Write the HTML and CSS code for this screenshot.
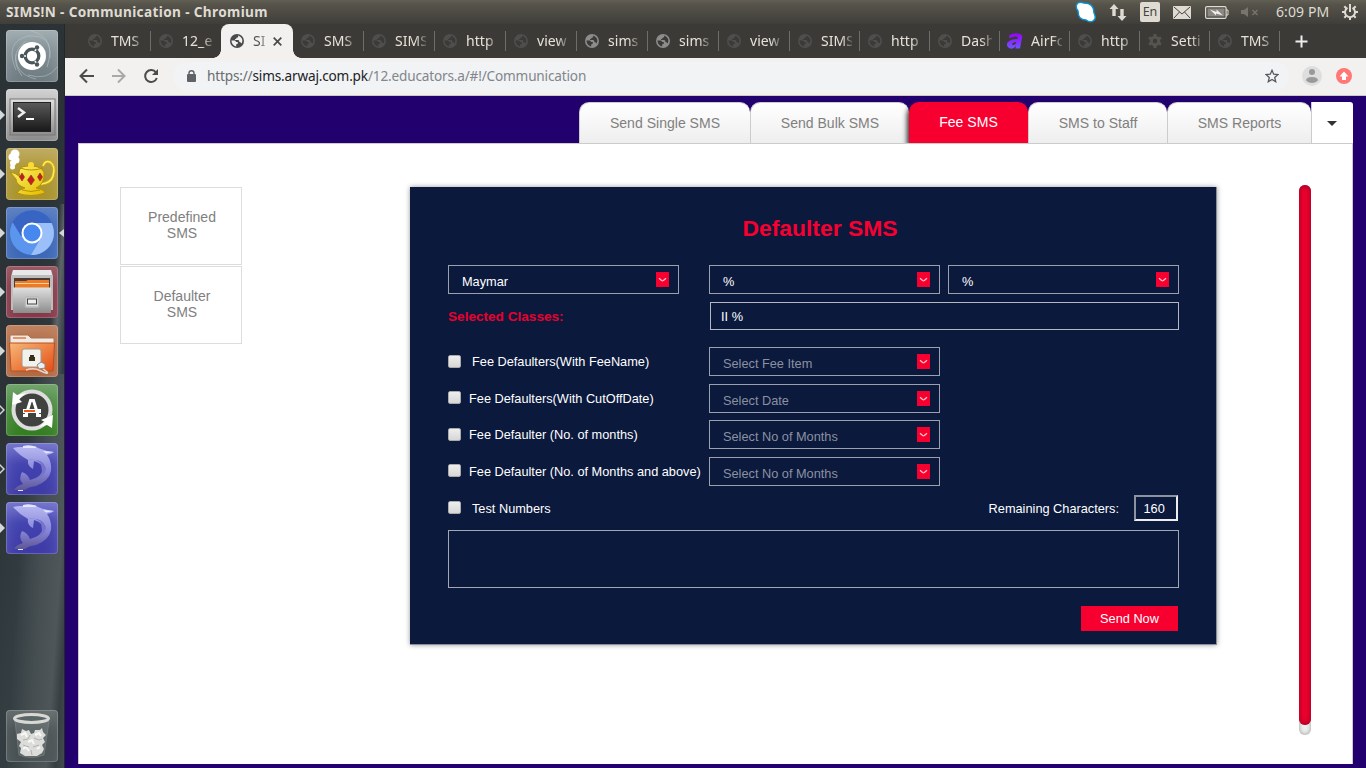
FILE: index.html
```html
<!DOCTYPE html>
<html lang="en">
<head>
<meta charset="utf-8">
<title>SIMS!N - Communication</title>
<link rel="stylesheet" href="styles.css">
</head>
<body>
<svg class="defs" width="0" height="0">
  <defs>
    <symbol id="globe" viewBox="0 0 14 14">
      <circle cx="7" cy="7" r="7" fill="currentColor"/>
      <path d="M1.400 6.500H4.600Q6 6.500 6 8H7.800V9.600Q7.500 10.300 6.200 10.300V12.400Q2 11.700 1.400 6.500Z" fill="var(--land)"/>
      <path d="M8.200 1.600V2.800Q8 3.800 6.600 3.800Q6.600 5 5 5.200V6H8.400Q9.400 6.400 9.400 7.900Q11 7.800 11.500 9.600Q14.200 4.500 8.200 1.600Z" fill="var(--land)"/>
    </symbol>
    <symbol id="dolphin" viewBox="0 0 52 52">
      <path d="M7 5Q12 3.500 17 4L18 3H29L32 5Q39 8 48 9Q46 11 41 12Q46 19 45 28Q43 38 30 43Q22 44 19 47L8 47Q10 43 17 41Q12 36 16 29Q22 31 24 37Q36 34 37 26Q36 20 28 18L27 26Q21 23 22 17Q13 12 7 5Z" fill="url(#fin)"/>
      <path d="M22 17Q30 15 35 21L36 28Q36 34 25 38Q40 34 40 25Q37 15 22 17Z" fill="#7573cc"/>
      <path d="M17 3Q24 1 30 4V5H17ZM37 8Q43 8.500 48 9L40 10.500ZM12 47H17V48H12Z" fill="#e4e6ff"/>
    </symbol>
    <linearGradient id="fin" x2="0" y2="1"><stop stop-color="#b8b9f3"/><stop offset=".6" stop-color="#8584d6"/><stop offset="1" stop-color="#5e5796"/></linearGradient>
    <linearGradient id="silver" x2="0" y2="1"><stop stop-color="#e0e0e0"/><stop offset="1" stop-color="#8c8c8c"/></linearGradient>
    <linearGradient id="screen" x2="0" y2="1"><stop stop-color="#5a5a5a"/><stop offset="1" stop-color="#181818"/></linearGradient>
    <linearGradient id="folder" x2="1" y2="1"><stop stop-color="#f7b878"/><stop offset="1" stop-color="#e44d14"/></linearGradient>
    <linearGradient id="gold" x2="1" y2="1"><stop stop-color="#fff36b"/><stop offset="1" stop-color="#e2bb00"/></linearGradient>
    <linearGradient id="violet" x2="0" y2="1"><stop stop-color="#9b00ff"/><stop offset="1" stop-color="#6f55ff"/></linearGradient>
    <symbol id="chevron" viewBox="0 0 13 15"><path d="M3 6.300L5.600 8.500Q6.500 9.100 7.400 8.500L10 6.300" fill="none" stroke="#ffc4cc" stroke-width="1.300"/></symbol>
  </defs>
</svg>

<header class="menubar">
  <span class="window-title">SIMS!N - Communication - Chromium</span>
  <div class="indicators">
    <svg class="skype" width="22" height="22" viewBox="0 0 22 22"><path d="M2 3Q4 0 9 2Q19 2 19 12Q22 18 18 20Q15 22 11 19Q3 19 3 10Q0 6 2 3Z" fill="#fff" stroke="#0c8fcb" stroke-width="1.400"/></svg>
    <svg class="net" width="18" height="17" viewBox="0 0 18 17"><path d="M5 0L9.500 5H6.700V12H3.300V5H.5ZM13 17L8.500 12H11.300V5H14.700V12H17.500Z" fill="#dfdbd2"/></svg>
    <span class="lang">En</span>
    <svg class="mail" width="18" height="13" viewBox="0 0 18 13"><rect width="18" height="13" rx="1" fill="#dfdbd2"/><path d="M1 1L9 8L17 1M1 12L6.500 6M17 12L11.500 6" fill="none" stroke="#46443e"/></svg>
    <svg class="battery" width="24" height="13" viewBox="0 0 24 13"><rect x=".6" y=".6" width="20.500" height="11.800" rx="1.500" fill="none" stroke="#dfdbd2" stroke-width="1.200"/><rect x="2.500" y="2.500" width="17" height="8" fill="#898780"/><path d="M21 4H23V9H21" fill="none" stroke="#dfdbd2"/><path d="M5 3.500L11.500 6L11.500 3.500L18 9.500L11 7.500V9.500Z" fill="#eee"/></svg>
    <svg class="sound" width="18" height="12" viewBox="0 0 18 12"><path d="M0 4H3L7 1V11L3 8H0Z" fill="#77756e"/><path d="M11.500 4L16.500 9M16.500 4L11.500 9" stroke="#77756e" stroke-width="1.400"/></svg>
    <span class="clock">6:09 PM</span>
    <svg class="power" width="16" height="16" viewBox="0 0 16 16"><path d="M8 0V8" stroke="#dfdbd2" stroke-width="2"/><path d="M5.500 3.900A5 5 0 1 0 10.500 3.900" fill="none" stroke="#dfdbd2" stroke-width="2"/><path d="M8 13V16M0 8H3M13 8H16M2.300 2.300L4.500 4.500M13.700 2.300L11.500 4.500M2.300 13.700L4.500 11.500M13.700 13.700L11.500 11.500" stroke="#dfdbd2" stroke-width="2"/></svg>
  </div>
</header>

<div class="desktop">
  <nav class="launcher">
    <div class="tile dash"><svg viewBox="0 0 52 52"><g fill="none" stroke="#b8c4c8" opacity=".55"><path d="M10 40Q-2 12 22 6Q46 4 44 28M16 46Q1 25 20 11M30 49Q8 44 10 24M25 1Q51 7 41 37M51 37Q42 51 22 45"/></g><circle cx="26" cy="26" r="14" fill="#fff"/><circle cx="26" cy="26" r="6.800" fill="none" stroke="#4b565a" stroke-width="3.300"/><path d="M20 26H14M29 21L33 14M29 31L33 38" stroke="#fff" stroke-width="1.600"/><g fill="#4b565a"><circle cx="16" cy="26" r="2.200"/><circle cx="31" cy="17.500" r="2.200"/><circle cx="31" cy="34.500" r="2.200"/></g></svg></div>
    <div class="tile terminal running"><svg viewBox="0 0 52 52"><rect x="4" y="10" width="45" height="36" fill="url(#silver)" stroke="#777"/><rect x="7.500" y="13.500" width="37" height="29" fill="url(#screen)" stroke="#222"/><path d="M12 19L18 23.500L12 28" fill="none" stroke="#eee" stroke-width="2.500"/><path d="M20 30H28" stroke="#fff" stroke-width="2"/></svg></div>
    <div class="tile teapot running"><svg viewBox="0 0 52 52"><g fill="#fff"><circle cx="9" cy="6" r="4.500"/><circle cx="6" cy="9" r="3.500"/><circle cx="10" cy="12" r="3.500"/><circle cx="7" cy="15" r="3"/><circle cx="6.500" cy="19" r="2.500"/></g><path d="M37 18Q39 12 44 14Q50 18 47 28Q45 35 35 36" fill="none" stroke="#d4b010" stroke-width="3"/><path d="M37 18Q39 12 44 14Q50 18 47 28Q45 35 35 36" fill="none" stroke="#ffed62" stroke-width="1.500"/><path d="M4 24Q10 25 14 29Q10 18 22 18Q34 17 38 24Q39 36 30 40Q39 42 39 45Q25 50 11 45Q12 42 19 40Q10 37 10 31Z" fill="url(#gold)" stroke="#b89100"/><circle cx="25" cy="17" r="3" fill="#f8dc31"/><path d="M14 20Q25 24 37 20M16 42Q25 45 34 42" fill="none" stroke="#b89100"/><path d="M16 25L18.500 29L16 33L13.500 29ZM25 27L28.500 32L25 37L21.500 32ZM34 25L36.500 29L34 33L31.500 29Z" fill="#c81d20" stroke="#7e3815" stroke-width=".6"/></svg></div>
    <div class="tile chromium running focused"><svg viewBox="0 0 52 52"><circle cx="26" cy="26" r="22" fill="#5c95ed"/><path d="M6.500 15A22 22 0 0 1 46 16H26L15 29Z" fill="#3865c3"/><path d="M26 16H45.500A22 22 0 0 1 25 48L35 31Z" fill="#9abff9"/><circle cx="26" cy="26" r="10.500" fill="#fff"/><circle cx="26" cy="26" r="8.500" fill="#4688ef"/></svg></div>
    <div class="tile cabinet running"><svg viewBox="0 0 52 52"><path d="M7 4H45L47 10V44H5V10Z" fill="#bdbdbd"/><path d="M7 4H45L46 9H6Z" fill="#e8e8e8"/><path d="M8 12H44V25H8Z" fill="#4b3a36"/><path d="M9 15H20L22 14H43V23H9Z" fill="#ec7b28"/><path d="M9 17.500H43" stroke="#ffd09a" stroke-width="1.200"/><path d="M7 21.500H45V47H7Z" fill="url(#silver)"/><rect x="19.500" y="31" width="13" height="10" rx="1" fill="#ddd" stroke="#bbb" stroke-width="1.500"/><rect x="21.500" y="33" width="9" height="5" fill="#eee" stroke="#444"/></svg></div>
    <div class="tile netfolder running"><svg viewBox="0 0 52 52"><path d="M4 10H22L25 13H48V28H4Z" fill="#eee9e3" stroke="#a87352"/><path d="M7 13H20" stroke="#e69365" stroke-width="2"/><path d="M3.500 18H48.500L47 46H5Z" fill="url(#folder)" stroke="#bc501e"/><rect x="16" y="24" width="19" height="18" rx="2" fill="#f2f2ed" stroke="#a2978b"/><path d="M23 32H24V30H28V32H29V36H23Z" fill="#35311d"/><path d="M20 45Q28 42 35 46Q43 50 41 47L36 43" fill="none" stroke="#e4d8d0" stroke-width="1.600"/><path d="M31 40L35 37L39 39V43L33 44Z" fill="#eee" stroke="#888"/></svg></div>
    <div class="tile updater running idle"><svg viewBox="0 0 52 52"><circle cx="26" cy="26" r="18.500" fill="#40423f" stroke="#ddd" stroke-width="4"/><path d="M7 8L6 21L16 18L13 15L20 9L11 11ZM46 44L47 31L35 36L39 38L33 43L41 41Z" fill="#fff"/><path d="M17 31.500H22M30 31.500H35M20 31L24.500 16.500H27.500L32 31" fill="none" stroke="#fff" stroke-width="3"/><path d="M17 27H35" stroke="#fff" stroke-width="4"/><path d="M18 27H29" stroke="#f05a18" stroke-width="2"/></svg></div>
    <div class="tile workbench running idle"><svg><use href="#dolphin"/></svg></div>
    <div class="tile workbench running"><svg><use href="#dolphin"/></svg></div>
    <div class="tile trash"><svg viewBox="0 0 52 52"><path d="M9 11L13 45Q25 50 38 45L43 11Z" fill="#889091" opacity=".35" stroke="#adb3b3"/><path d="M11 24L15 23L16 19L20 21L23 20L25 24L28 23L29 20L34 20L36 18L37 22L40 25L37 28L39 32L36 35L38 39L36 43L31 46H19L14 43L15 38L13 36L15 32L11 29Z" fill="#dcddda"/><path d="M15 25L19 23L21 27M29 25L33 23L35 26M22 32L26 30L28 34M17 39L20 37L23 41M31 39L34 37" fill="none" stroke="#f8f8f6" stroke-width="2"/><path d="M24 25L22 29L17 30M28 28L33 30L36 29M17 35L23 37M27 37L33 35M25 40L26 45" fill="none" stroke="#b0b2ae"/><ellipse cx="25.500" cy="8.500" rx="17" ry="4" fill="#5c6566" stroke="#d8d8d5" stroke-width="3"/></svg></div>
  </nav>

  <main class="browser">
    <div class="tabstrip">
      <div class="tab"><svg class="fav"><use href="#globe"/></svg><span>TMS</span></div>
      <div class="tab before"><svg class="fav"><use href="#globe"/></svg><span>12_e</span></div>
      <div class="tab active"><svg class="fav"><use href="#globe"/></svg><span>SI</span><svg class="close" viewBox="0 0 9 9"><path d="M.7 .7L8.300 8.300M8.300 .7L.7 8.300" stroke="#4b4b4b" stroke-width="1.700"/></svg></div>
      <div class="tab"><svg class="fav"><use href="#globe"/></svg><span>SMS</span></div>
      <div class="tab"><svg class="fav"><use href="#globe"/></svg><span>SIMS</span></div>
      <div class="tab"><svg class="fav"><use href="#globe"/></svg><span>http</span></div>
      <div class="tab"><svg class="fav"><use href="#globe"/></svg><span>view</span></div>
      <div class="tab bright"><svg class="fav"><use href="#globe"/></svg><span>sims</span></div>
      <div class="tab bright"><svg class="fav"><use href="#globe"/></svg><span>sims</span></div>
      <div class="tab"><svg class="fav"><use href="#globe"/></svg><span>view</span></div>
      <div class="tab narrow"><svg class="fav"><use href="#globe"/></svg><span>SIMS</span></div>
      <div class="tab narrow"><svg class="fav"><use href="#globe"/></svg><span>http</span></div>
      <div class="tab narrow"><svg class="fav"><use href="#globe"/></svg><span>Dash</span></div>
      <div class="tab narrow"><svg class="fav wide" viewBox="0 0 16 16"><path d="M2.500 2Q8-1 13 1Q16 2 15 5L13 15.500H8.500L9 13Q6 17 2 15Q-2 12 1 9Q4 6 10.500 6Q11.500 3 8 3.500L2 5ZM9.500 9Q5 9 5 11.500Q8 13.500 9.500 9Z" fill="url(#violet)"/></svg><span>AirFo</span></div>
      <div class="tab narrow"><svg class="fav"><use href="#globe"/></svg><span>http</span></div>
      <div class="tab narrow"><svg class="fav" viewBox="0 0 14 14"><circle cx="7" cy="7" r="3.700" fill="none" stroke="#55544f" stroke-width="3"/><path d="M7 0V3M7 11V14M1 3.500L3.500 5M13 3.500L10.500 5M1 10.500L3.500 9M13 10.500L10.500 9" stroke="#55544f" stroke-width="3"/></svg><span>Setti</span></div>
      <div class="tab narrow"><svg class="fav"><use href="#globe"/></svg><span>TMS</span></div>
      <svg class="newtab" width="13" height="13" viewBox="0 0 13 13"><path d="M6.500 .5V12.500M.5 6.500H12.500" stroke="#eee" stroke-width="2"/></svg>
    </div>
    <div class="toolbar">
      <svg class="nav" width="82" height="16" viewBox="0 0 82 16"><path d="M15 8H2M8 1.500L1.500 8L8 14.500" fill="none" stroke="#4b4b4b" stroke-width="2"/><path d="M33 8H45M39 1.500L45.500 8L39 14.500" fill="none" stroke="#aaa9a7" stroke-width="2"/><path d="M77 4.500A6 6 0 1 0 77.800 10" fill="none" stroke="#4b4b4b" stroke-width="2"/><path d="M79 1V7H73Z" fill="#4b4b4b"/></svg>
      <div class="address">
        <svg width="9" height="12" viewBox="0 0 9 12"><rect y="4" width="9" height="8" rx="1" fill="#5f6368"/><path d="M2 5V3Q2 .8 4.500 .8Q7 .8 7 3V5" fill="none" stroke="#5f6368" stroke-width="1.400"/></svg>
        <span class="url"><i>https://</i><b>sims.arwaj.com.pk</b><em>/12.educators.a/#!/Communication</em></span>
        <svg class="star" width="14" height="14" viewBox="0 0 14 14"><path d="M7 1.300L8.700 5.200L13 5.600L9.700 8.400L10.700 12.700L7 10.400L3.300 12.700L4.300 8.400L1 5.600L5.300 5.200Z" fill="none" stroke="#55595d" stroke-width="1.300"/></svg>
      </div>
      <svg class="avatar" width="20" height="20" viewBox="0 0 20 20"><circle cx="10" cy="10" r="10" fill="#dedede"/><circle cx="10" cy="6" r="3" fill="#999"/><path d="M4 14.500Q4 11 10 11Q16 11 16 14.500Q13 17 10 17Q7 17 4 14.500Z" fill="#999"/></svg>
      <svg class="update" width="16" height="16" viewBox="0 0 16 16"><circle cx="8" cy="8" r="8" fill="#ff7777"/><path d="M8 3.500L12.500 8.500H10V12H6V8.500H3.500Z" fill="#fff"/></svg>
    </div>

    <div class="page">
      <nav class="section-tabs">
        <a class="st single">Send Single SMS</a>
        <a class="st bulk">Send Bulk SMS</a>
        <a class="st fee">Fee SMS</a>
        <a class="st staff">SMS to Staff</a>
        <a class="st reports">SMS Reports</a>
        <a class="more"><svg width="10" height="5" viewBox="0 0 10 5"><path d="M0 0H10L5 5Z" fill="#333"/></svg></a>
      </nav>
      <section class="sheet">
        <div class="side">
          <a>Predefined<br>SMS</a>
          <a>Defaulter<br>SMS</a>
        </div>
        <form class="card">
          <h1>Defaulter SMS</h1>
          <div class="row filters">
            <div class="select filled"><span>Maymar</span><svg class="chev"><use href="#chevron"/></svg></div>
            <div class="select filled second"><span>%</span><svg class="chev"><use href="#chevron"/></svg></div>
            <div class="select filled third"><span>%</span><svg class="chev"><use href="#chevron"/></svg></div>
          </div>
          <div class="row classes"><label>Selected Classes:</label><div class="field">II %</div></div>
          <div class="row option"><span class="check"></span><label class="indent">Fee Defaulters(With FeeName)</label><div class="select"><span>Select Fee Item</span><svg class="chev"><use href="#chevron"/></svg></div></div>
          <div class="row option"><span class="check"></span><label>Fee Defaulters(With CutOffDate)</label><div class="select"><span>Select Date</span><svg class="chev"><use href="#chevron"/></svg></div></div>
          <div class="row option"><span class="check"></span><label>Fee Defaulter (No. of months)</label><div class="select"><span>Select No of Months</span><svg class="chev"><use href="#chevron"/></svg></div></div>
          <div class="row option"><span class="check"></span><label>Fee Defaulter (No. of Months and above)</label><div class="select"><span>Select No of Months</span><svg class="chev"><use href="#chevron"/></svg></div></div>
          <div class="row option test"><span class="check"></span><label class="indent">Test Numbers</label><span class="remaining">Remaining Characters:</span><div class="count">160</div></div>
          <div class="message"></div>
          <div class="actions"><a class="send">Send Now</a></div>
        </form>
        <div class="scroll"><div class="thumb"></div></div>
      </section>
    </div>
  </main>
</div>
</body>
</html>
```
FILE: styles.css
```css
* { box-sizing: border-box; }
body { margin: 0; width: 1366px; height: 768px; overflow: hidden; font-family: "Liberation Sans", Arial, sans-serif; background: #22006e; }
svg { display: block; flex: none; }
.defs { position: absolute; }

.menubar { height: 24px; display: flex; justify-content: space-between; padding: 0 8px 0 6px; background: linear-gradient(#625f54, #55534a 20%, #3f3e39); color: #dfdbd2; font: 13px/24px "Noto Sans", sans-serif; white-space: nowrap; }
.window-title { font-weight: 700; font-size: 13.6px; letter-spacing: .36px; }
.indicators { display: flex; align-items: center; }
.net { margin-left: 12px; }
.lang { margin-left: 13px; width: 20px; height: 20px; border-radius: 2px; background: #dfdbd2; color: #45443e; line-height: 20px; text-align: center; font-size: 12.5px; }
.mail { margin-left: 13px; }
.battery { margin-left: 14px; }
.sound { margin-left: 12px; }
.clock { margin-left: 17px; width: 53px; font-size: 14px; letter-spacing: .1px; }
.power { margin-left: 13px; }

.desktop { display: flex; height: 744px; }
.launcher { width: 65px; display: flex; flex-direction: column; gap: 7px; padding: 6px 0 6px 6px; border-right: 1px solid #25292b; background: linear-gradient(94deg, transparent 35%, #59616480 60%, #666e7190 80%, #40484b80 90%, #5e666980) 0 350px / 100% 400px no-repeat, linear-gradient(94deg, transparent 78%, #5d6568 86%, transparent 98%) 0 180px / 100% 170px no-repeat, linear-gradient(100deg, #2b3336 40%, #343e42 65%, #2c3235); }
.tile { position: relative; width: 52px; height: 52px; border-radius: 4px; box-shadow: inset 0 0 0 1px #ffffff30, inset 0 10px 16px #ffffff30; }
.tile svg { width: 52px; height: 52px; }
.dash { background: linear-gradient(#8f9da2, #6d7a80); }
.terminal { background: linear-gradient(#c9c9c9, #8b8b8b); }
.teapot { background: linear-gradient(#b39b41, #a8932c); }
.chromium { background: #3d68b7; }
.cabinet { background: #853848; }
.netfolder { background: #b26a43; }
.updater { background: linear-gradient(#569350, #327c1f); }
.workbench { background: linear-gradient(#5a5bc2, #4343b0 40%, #3d3aa5); }
.trash { margin-top: auto; background: #4c5557aa; }
.running::before { content: ""; position: absolute; left: -6px; top: 21px; border: 5px solid transparent; border-left-color: #d5d8d8; border-right: 0; }
.idle::after { content: ""; position: absolute; left: -6px; top: 23px; border: 3px solid transparent; border-left: 3px solid #2e3639; border-right: 0; }
.focused::after { content: ""; position: absolute; left: 53px; top: 22px; border: 4px solid transparent; border-right: 5px solid #d5d8d8; border-left: 0; }

.browser { width: 1301px; display: flex; flex-direction: column; }
.tabstrip { height: 34px; display: flex; align-items: center; padding-left: 15px; background: #3c3a36; }
.tab { position: relative; width: 71px; height: 34px; flex: none; display: flex; align-items: center; padding-left: 8px; color: #4e4e4d; --land: #3c3a36; }
.tab::after { content: ""; position: absolute; right: 0; top: 7px; width: 1px; height: 20px; background: #6f6d69; }
.narrow { width: 70px; }
.fav { width: 14px; height: 14px; margin-right: 9px; }
.fav.wide { width: 16px; height: 16px; margin: 0 8px 0 -1px; }
.tab span { width: 31px; white-space: nowrap; color: #e6e2d9; font: 14px/34px "Noto Sans", sans-serif; letter-spacing: .05px; -webkit-mask-image: linear-gradient(90deg, #000 65%, transparent 110%); }
.bright { color: #8c8c8c; }
.active { width: 72px; margin: 0 0 0 -1px; background: #f2f1f0; border-radius: 8px 8px 0 0; padding-left: 9px; color: #4a4a4a; --land: #f2f1f0; }
.active::after, .active::before { content: ""; position: absolute; bottom: 0; top: auto; width: 8px; height: 8px; }
.active::before { left: -8px; background: radial-gradient(circle at 0 0, transparent 7.5px, #f2f1f0 8px); }
.tab.active::after { top: auto; width: 8px; height: 8px; right: -8px; background: radial-gradient(circle at 100% 0, transparent 7.5px, #f2f1f0 8px); }
.before::after { display: none; }
.tab.active span { width: 12px; color: #55534f; -webkit-mask-image: linear-gradient(90deg, #000 60%, transparent 130%); }
.close { width: 9px; height: 9px; margin-left: 8px; }
.newtab { margin-left: 15px; }
.toolbar { height: 38px; display: flex; align-items: center; padding: 0 14px 1px; background: #f2f1f0; border-bottom: 1px solid #ccc9c7; }
.nav { width: 82px; }
.address { margin-left: 12px; width: 1116px; height: 29px; flex: none; display: flex; align-items: center; padding: 0 10px 0 14px; border-radius: 15px; background: #f1f3f4; }
.url { margin: 0 auto 0 11px; font: 13.6px/28px "Noto Sans", sans-serif; white-space: nowrap; letter-spacing: -.17px; }
.url i, .url em { font-style: normal; color: #80868b; }
.url i { color: #686c70; }
.url b { font-weight: 400; color: #202124; }
.avatar { margin-left: 13px; }
.update { margin-left: 14px; }

.page { flex: 1; padding: 6px 13px 4px; background: #22006e; }
.section-tabs { height: 41px; display: flex; justify-content: flex-end; }
.st { display: flex; align-items: center; justify-content: center; border: 1px solid #ccc; border-width: 1px 0 0 1px; border-radius: 10px 10px 0 0; background: linear-gradient(#fff, #eee); color: #808080; font-size: 14.06px; white-space: nowrap; }
.single { width: 171px; }
.bulk { width: 159px; }
.fee { width: 119px; border-color: #f70030; background: #f70030; color: #fff; padding: 0 1px 2px 0; box-shadow: -2px 3px 5px #333; clip-path: inset(0 0 0 -8px); }
.staff { width: 139px; }
.reports { width: 144px; }
.more { width: 42px; display: flex; align-items: center; justify-content: center; padding: 2px 2px 0 0; background: #fff; border: 1px solid #ccc; border-width: 0 0 0 1px; border-radius: 0 3px 0 0; }
.sheet { height: 621px; display: flex; background: #fff; border: 1px solid #ccc; border-bottom: 0; }
.side { margin: 43px 0 0 41px; width: 122px; }
.side a { display: flex; align-items: center; justify-content: center; height: 78px; margin-bottom: 1px; border: 1px solid #ddd; color: #808080; font-size: 14.06px; line-height: 16px; text-align: center; padding: 0 0 2px 2px; }
.card { margin: 43px 0 0 168px; width: 807px; height: 458px; flex: none; padding: 28px 37px 0 38px; border: solid #8b919c; border-width: 0 1px 1px 0; background: #0b193d; box-shadow: 0 0 5px #999; color: #fff; font-size: 12.76px; }
.card h1 { margin: 0 0 24px 13px; height: 26px; color: #f70030; font-size: 22.9px; line-height: 26px; text-align: center; }
.row { display: flex; white-space: nowrap; }
.select { width: 231px; height: 29px; flex: none; display: flex; justify-content: space-between; align-items: center; padding: 0 9px 0 13px; border: 1px solid #9ba0ac; color: #8a91a0; }
.select span { padding-top: 4px; }
.filled { color: #fff; }
.chev { width: 13px; height: 15px; background: #f70030; }
.second { margin-left: 30px; }
.third { margin-left: 8px; }
.classes { height: 28px; margin: 8px 0 17.4px; justify-content: space-between; }
.classes label { line-height: 29px; color: #e8002f; font-weight: 700; font-size: 13.6px; }
.field { width: 469px; height: 28px; border: 1px solid #b3b7c0; padding-left: 10px; line-height: 27px; }
.option { height: 29px; margin-bottom: 7.5px; align-items: center; }
.check { width: 13px; height: 13px; margin: 0 8px 1px 0; border: 1px solid #aaa; border-radius: 2px; background: linear-gradient(#eee, #d7d7d7); }
.option label { width: 240px; }
.option .indent { width: 237px; margin-left: 3px; }
.test { height: 26px; margin: 9.4px 0 9px; }
.remaining { margin-left: auto; margin-right: 15px; }
.count { width: 44px; height: 26px; margin-right: 1px; padding-left: 7.5px; border: 2px solid; border-color: #8c92a0 #eee #eee #8c92a0; line-height: 23px; }
.message { width: 731px; height: 58px; border: 1px solid #a3a7b1; }
.actions { display: flex; justify-content: flex-end; padding: 18px 1px 0 0; }
.send { width: 97px; height: 25px; background: #f70030; text-align: center; line-height: 25px; }
.scroll { margin: 41px 0 0 82px; width: 12px; height: 550px; border-radius: 6px; background: #eee; box-shadow: inset 0 0 4px #999; }
.thumb { height: 540px; border-radius: 6px; background: #f00030; box-shadow: inset 0 0 6px #900020; }
```
